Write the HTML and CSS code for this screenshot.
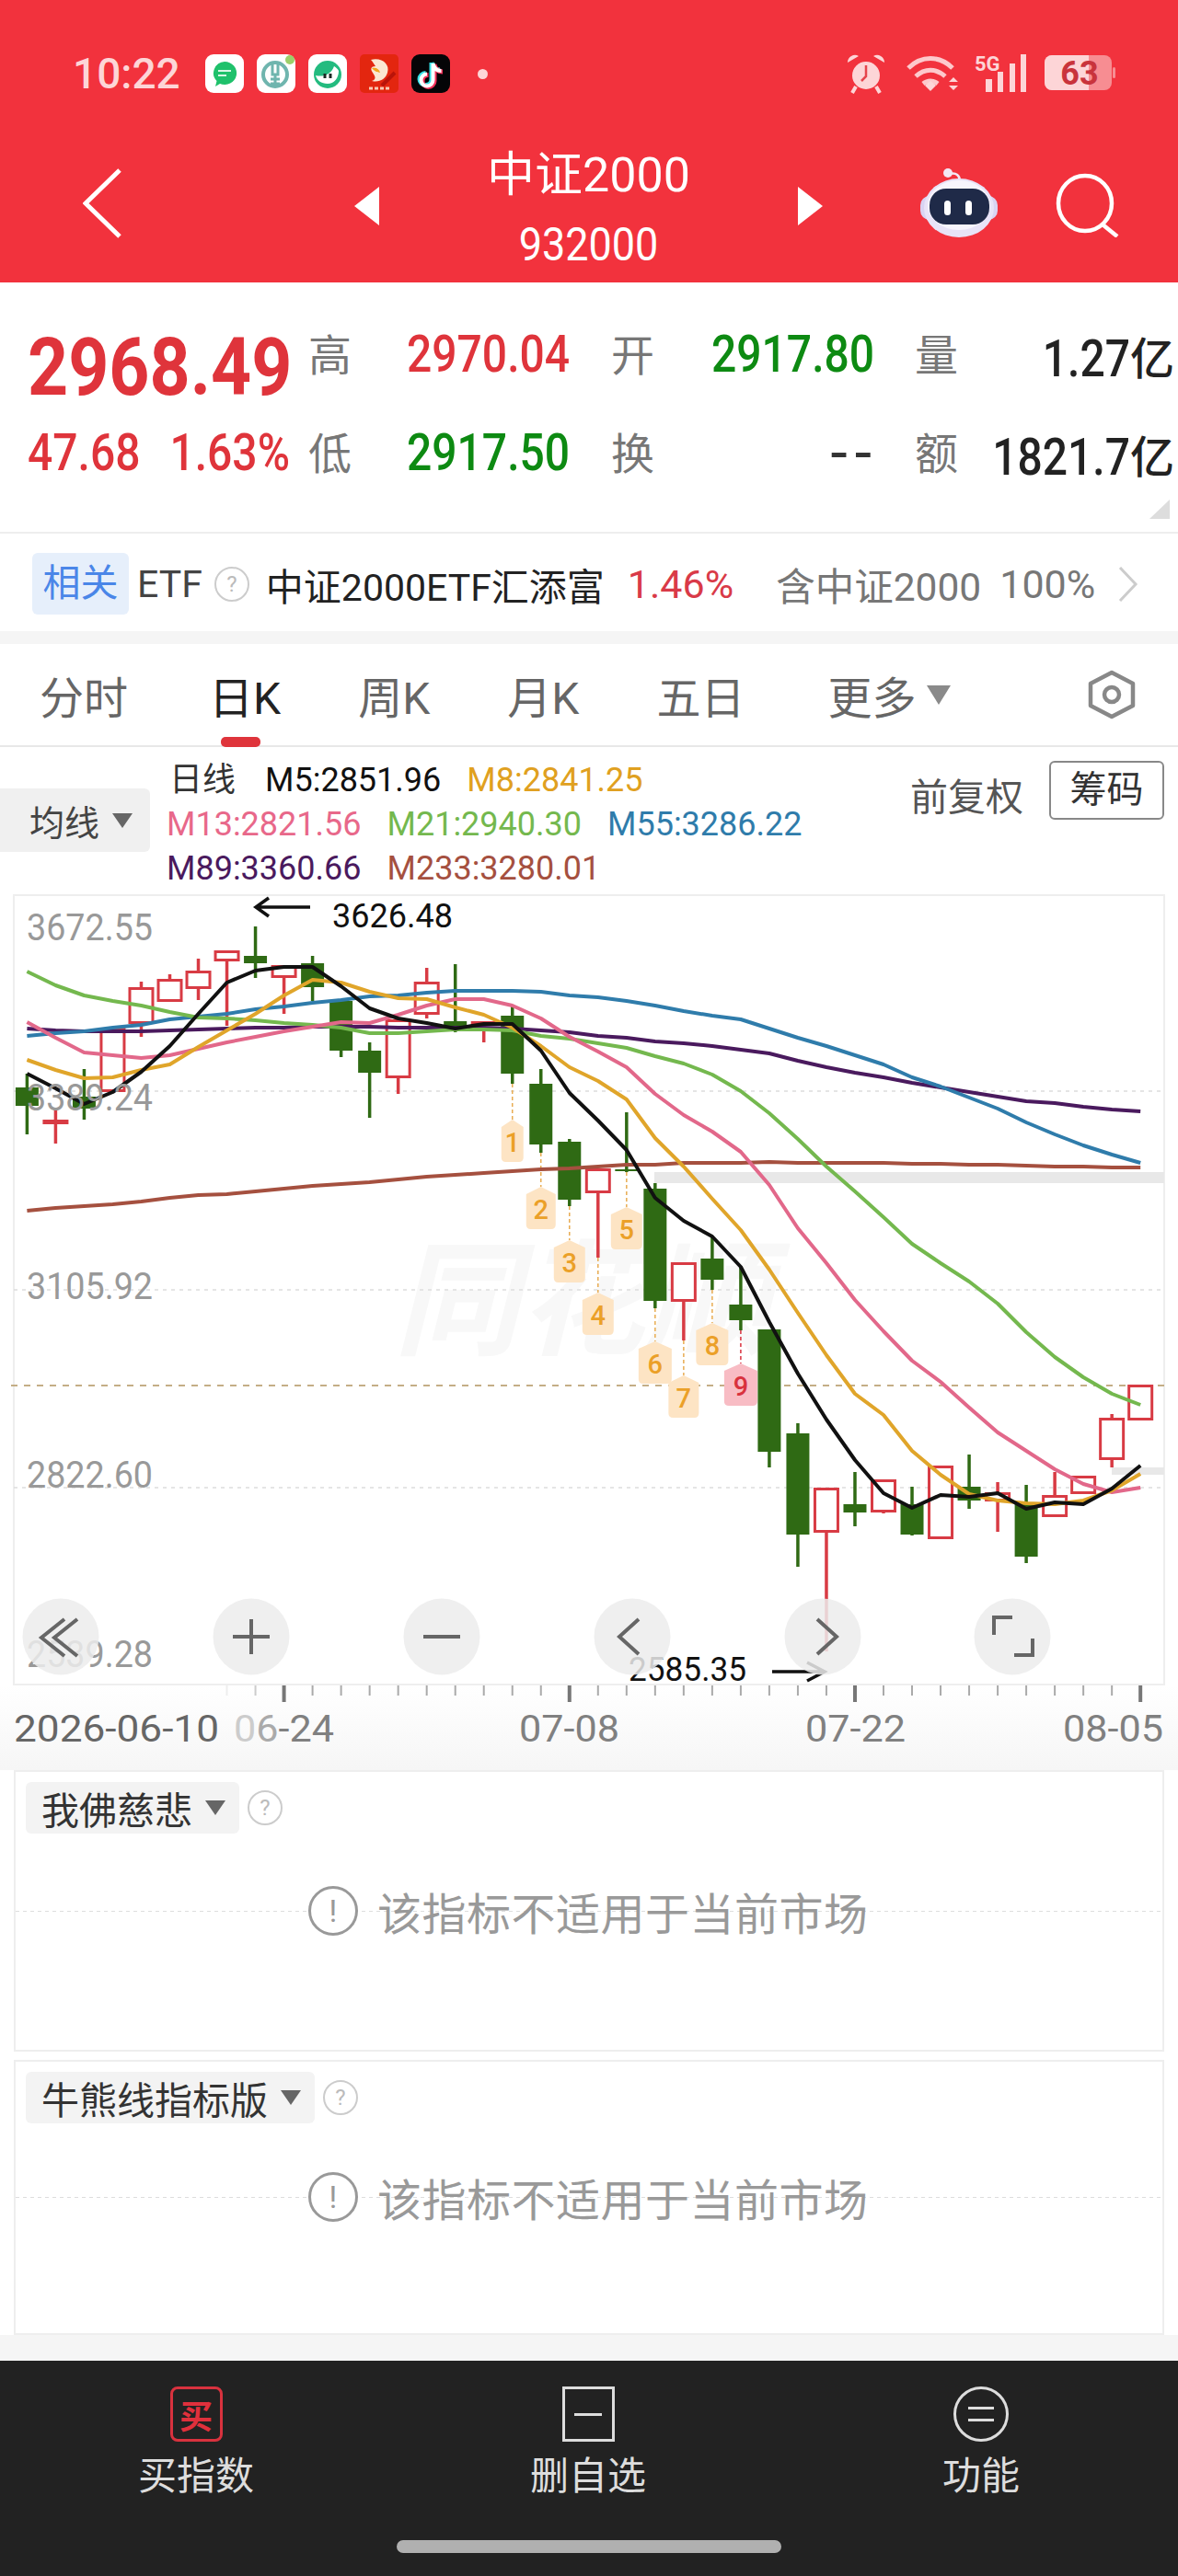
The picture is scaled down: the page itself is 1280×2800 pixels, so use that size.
FILE: index.html
```html
<!DOCTYPE html>
<html>
  <head>
    <meta charset="UTF-8">
    <title>中证2000</title>
    <link rel="stylesheet" href="styles.css">
  </head>
  <body>
    <header class="top">
      <div class="status">
        <span class="clock">10:22</span>
        <div class="apps">
          <svg class="app" viewBox="0 0 42 42"><rect width="42" height="42" rx="9" fill="#fff"/><path d="M21 8a13 12.5 0 1 1-5 24l-5 3 1.500-6A13 12.500 0 0 1 21 8z" fill="#1fc16b"/><path d="M14 18h14M14 23h9" stroke="#d8f7e5" stroke-width="2"/></svg>
          <svg class="app" viewBox="0 0 42 42"><rect width="42" height="42" rx="9" fill="#fff"/><circle cx="20" cy="22" r="13" fill="none" stroke="#6fb5ae" stroke-width="4"/><path d="M17 8v14h6V8M15 27h10M15 32h10M20 22v13" fill="none" stroke="#6fb5ae" stroke-width="3"/><circle cx="36" cy="6" r="5" fill="#9ccf6a"/></svg>
          <svg class="app" viewBox="0 0 42 42"><rect width="42" height="42" rx="9" fill="#fff"/><circle cx="21" cy="22" r="15" fill="#23bb7f"/><path d="M8 23c8 2 17-1 20-10 2 1 4 3 5 5 0 8-5 14-12 14-7 0-12-4-13-9z" fill="#fff"/><path d="M18 21v5M24 21v5" stroke="#1b2a25" stroke-width="3"/></svg>
          <svg class="app" viewBox="0 0 42 42"><rect width="42" height="42" rx="5" fill="#e3260f"/><path d="M12 6c12-3 21 5 18 14-2 7-9 11-17 9 6-2 3-6 1-9-3-4-2-7 3-7-2-3-3-5-5-7z" fill="#fbe7d2"/><path d="M13 15c5-1 8 1 9 5-3-1-6-1-9-5z" fill="#f2a51e"/><path d="M24 34l14-14" stroke="#b9140a" stroke-width="4"/><path d="M10 37h22" stroke="#f9c9b4" stroke-width="3" stroke-dasharray="4 2"/></svg>
          <svg class="app" viewBox="0 0 42 42"><rect width="42" height="42" rx="9" fill="#050507"/><path d="M22 9v18a6.500 6.500 0 1 1-6.500-6.500M22 9c1 5 4 8 9 8" fill="none" stroke="#36e0e6" stroke-width="5"/><path d="M25 11v18a6.500 6.500 0 1 1-6.500-6.500M25 11c1 5 4 8 9 8" fill="none" stroke="#f4315a" stroke-width="5"/><path d="M23.500 10v18a6.500 6.500 0 1 1-6.500-6.500M23.500 10c1 5 4 8 9 8" fill="none" stroke="#fff" stroke-width="4"/></svg>
          <i class="dot"></i>
        </div>
        <div class="sys">
          <svg class="sys-alarm" viewBox="0 0 44 44"><circle cx="22" cy="24" r="15" fill="#fdd5d7"/><path d="M2 10a8 8 0 0 1 12-7zM42 10a8 8 0 0 0-12-7z" fill="#fdd5d7"/><path d="M11 36l-4 7M33 36l4 7" stroke="#fdd5d7" stroke-width="4"/><path d="M22 13v12l-5 5" fill="none" stroke="#e6444c" stroke-width="2.500"/></svg>
          <svg class="sys-wifi" viewBox="0 0 60 40"><path d="M3 14c14-14 34-14 48 0M11 23c10-9 22-9 32 0M19 31c5-4 11-4 16 0" fill="none" stroke="#fdc9cc" stroke-width="5"/><path d="M21 33l6-5 6 5-6 6z" fill="#fdd5d7"/><path d="M47 29l5-5 5 5zM47 33h10l-5 5z" fill="#fdd5d7"/></svg>
          <svg class="sys-signal" viewBox="0 0 56 42"><text x="0" y="18" class="sys-5g">5G</text><path d="M12 27h7v14h-7zM25 19h6v22h-6zM38 10h6v31h-6zM50 0h6v41h-6z" fill="#fdd5d7"/></svg>
          <svg class="sys-batt" viewBox="0 0 78 40"><rect width="73" height="38" rx="8" fill="#f78d92"/><path d="M8 0h40v38H8a8 8 0 0 1-8-8V8a8 8 0 0 1 8-8z" fill="#fdd5d7"/><rect x="74" y="13" width="3" height="12" rx="1.500" fill="#f78d92"/><text x="38" y="32" text-anchor="middle" class="sys-level">63</text></svg>
        </div>
      </div>
      <nav class="nav">
        <svg class="nav-back" viewBox="0 0 42 76"><path d="M40 2L3 38l37 36" fill="none" stroke="#fff" stroke-width="5"/></svg>
        <i class="nav-prev"></i>
        <div class="nav-title">
          <div class="nav-name">中证2000</div>
          <div class="nav-code">932000</div>
        </div>
        <i class="nav-next"></i>
        <svg class="nav-robot" viewBox="0 0 84 76"><circle cx="30" cy="5" r="5" fill="#f3e7f4"/><path d="M32 6c7-2 11 2 11 8" fill="none" stroke="#f3e7f4" stroke-width="2.500"/><rect x="0" y="30" width="84" height="26" rx="10" fill="#d9d3f2"/><ellipse cx="42" cy="43" rx="38" ry="32" fill="#e8e3f7"/><ellipse cx="42" cy="40" rx="34" ry="27" fill="#f7f5fd"/><rect x="10" y="22" width="65" height="39" rx="18" fill="#1f2a48"/><rect x="26" y="35" width="7" height="16" rx="3.500" fill="#fff"/><rect x="49" y="35" width="7" height="16" rx="3.500" fill="#fff"/></svg>
        <svg class="nav-search" viewBox="0 0 70 70"><ellipse cx="32" cy="33" rx="29" ry="30" fill="none" stroke="#fff" stroke-width="4.500"/><path d="M51 56l16 13" stroke="#fff" stroke-width="4.500"/></svg>
      </nav>
    </header>

    <section class="quote">
      <div class="q-last up"><span class="num">2968.49</span></div>
      <div class="q-label">高</div><div class="q-val up"><span class="num">2970.04</span></div>
      <div class="q-label">开</div><div class="q-val down"><span class="num">2917.80</span></div>
      <div class="q-label">量</div><div class="q-val q-right"><span class="num">1.27</span>亿</div>
      <div class="q-chg up"><span class="num">47.68</span><span class="num">1.63%</span></div>
      <div class="q-label">低</div><div class="q-val down"><span class="num">2917.50</span></div>
      <div class="q-label">换</div><div class="q-val q-dash">--</div>
      <div class="q-label">额</div><div class="q-val q-right"><span class="num">1821.7</span>亿</div>
      <i class="q-corner"></i>
    </section>

    <section class="etf">
      <span class="etf-tag">相关</span>
      <span class="etf-word">ETF</span>
      <span class="etf-help">?</span>
      <span class="etf-name">中证2000ETF汇添富</span>
      <span class="etf-pct">1.46%</span>
      <span class="etf-hold">含中证2000</span>
      <span class="etf-share">100%</span>
      <svg class="etf-more" viewBox="0 0 22 38"><path d="M2 1l17 18L2 37" fill="none" stroke="#ccc" stroke-width="3"/></svg>
    </section>

    <div class="sep"></div>

    <div class="tabs">
      <span class="tab">分时</span>
      <span class="tab on">日K</span>
      <span class="tab">周K</span>
      <span class="tab">月K</span>
      <span class="tab">五日</span>
      <span class="tab tab-more">更多<i class="caret"></i></span>
      <svg class="tab-gear" viewBox="0 0 56 54"><path d="M28 3l23 12v24L28 51 5 39V15z" fill="none" stroke="#888" stroke-width="4.500" stroke-linejoin="round"/><ellipse cx="28" cy="27" rx="8" ry="8" fill="none" stroke="#888" stroke-width="4.500"/></svg>
    </div>

    <div class="legend">
      <div class="ma-pick">均线<i class="caret small"></i></div>
      <div class="ma-rows">
        <div class="ma-row first"><span class="ma-day">日线</span><span class="c5">M5:2851.96</span><span class="c8">M8:2841.25</span></div>
        <div class="ma-row"><span class="c13">M13:2821.56</span><span class="c21">M21:2940.30</span><span class="c55">M55:3286.22</span></div>
        <div class="ma-row"><span class="c89">M89:3360.66</span><span class="c233">M233:3280.01</span></div>
      </div>
      <div class="adjust">前复权</div>
      <div class="chips">筹码</div>
    </div>

    <svg id="chart" class="chart" viewBox="0 972 1280 952"></svg>

    <section class="panel">
      <div class="panel-head"><span class="pick">我佛慈悲<i class="caret small"></i></span><span class="help">?</span></div>
      <div class="panel-msg"><span class="warn">!</span><span class="msg-text">该指标不适用于当前市场</span></div>
    </section>
    <section class="panel second">
      <div class="panel-head"><span class="pick">牛熊线指标版<i class="caret small"></i></span><span class="help">?</span></div>
      <div class="panel-msg"><span class="warn">!</span><span class="msg-text">该指标不适用于当前市场</span></div>
    </section>

    <footer class="bottom">
      <div class="actions">
        <div class="action"><span class="act-buy">买</span><span class="act-label">买指数</span></div>
        <div class="action"><span class="act-box"><i></i></span><span class="act-label">删自选</span></div>
        <div class="action"><span class="act-menu"><i></i><i></i></span><span class="act-label">功能</span></div>
      </div>
      <div class="home"></div>
    </footer>

    <script>
      // every y below is a page pixel, the svg viewBox starts at 972
      const svg = document.getElementById('chart');
      const NS = 'http://www.w3.org/2000/svg';
      const cx = i => 29.4 + 31.02 * i;

      function add(tag, attrs, text) {
        const el = document.createElementNS(NS, tag);
        for (const k in attrs) el.setAttribute(k, attrs[k]);
        if (text !== undefined) el.textContent = text;
        svg.appendChild(el);
        return el;
      }

      // text squeezed to the narrow digits of the app
      function label(x, y, cls, text, width) {
        return add('text', { x: x, y: y, class: cls, textLength: width, lengthAdjust: 'spacingAndGlyphs' }, text);
      }

      // [high, top, bottom, low, up?]
      const candles = [
        [1167, 1182, 1202, 1233, 0], [1205, 1217, 1222, 1243, 1], [1162, 1192, 1205, 1217, 0],
        [1117, 1117, 1187, 1187, 1], [1067, 1073, 1113, 1127, 1], [1059, 1064, 1089, 1089, 1],
        [1042, 1055, 1075, 1087, 1], [1033, 1033, 1045, 1115, 1], [1007, 1039, 1047, 1063, 0],
        [1049, 1049, 1063, 1102, 1], [1039, 1047, 1073, 1088, 0], [1088, 1088, 1142, 1149, 0],
        [1133, 1142, 1166, 1215, 0], [1108, 1108, 1172, 1189, 1], [1052, 1067, 1103, 1107, 1],
        [1048, 1110, 1119, 1122, 0], [1110, 1110, 1115, 1133, 1], [1094, 1104, 1167, 1178, 0],
        [1162, 1178, 1244, 1253, 0], [1238, 1241, 1304, 1311, 0], [1270, 1270, 1297, 1367, 1],
        [1209, 1271, 1273, 1274, 0], [1286, 1292, 1414, 1422, 0], [1372, 1372, 1415, 1457, 1],
        [1345, 1368, 1391, 1402, 0], [1377, 1418, 1435, 1446, 0], [1445, 1445, 1578, 1595, 0],
        [1547, 1558, 1668, 1703, 0], [1617, 1617, 1666, 1795, 1], [1600, 1635, 1644, 1659, 0],
        [1608, 1608, 1644, 1645, 1], [1616, 1635, 1668, 1669, 0], [1593, 1593, 1673, 1673, 1],
        [1581, 1616, 1631, 1640, 0], [1611, 1622, 1632, 1665, 1], [1614, 1635, 1692, 1699, 0],
        [1600, 1625, 1649, 1649, 1], [1604, 1604, 1624, 1624, 1], [1537, 1541, 1587, 1595, 1],
        [1505, 1505, 1544, 1544, 1]
      ];

      const lines = {
        '#a5503f': [1316, 1313, 1311, 1309, 1306, 1302, 1299, 1298, 1295, 1292, 1289, 1287, 1285, 1282, 1279, 1277, 1275, 1273, 1271, 1270, 1268, 1266, 1266, 1264, 1264, 1264, 1263, 1264, 1264, 1264, 1264, 1265, 1265, 1266, 1266, 1267, 1268, 1268, 1269, 1269],
        '#4a1a5e': [1118, 1120, 1121, 1121, 1121, 1120, 1119, 1118, 1117, 1117, 1116, 1116, 1116, 1117, 1117, 1117, 1117, 1118, 1120, 1122, 1126, 1128, 1132, 1134, 1137, 1141, 1145, 1153, 1160, 1166, 1171, 1177, 1182, 1187, 1192, 1197, 1199, 1203, 1206, 1208],
        '#2f7cab': [1126, 1123, 1121, 1117, 1114, 1108, 1105, 1102, 1097, 1094, 1090, 1087, 1083, 1082, 1079, 1077, 1077, 1077, 1078, 1082, 1084, 1088, 1093, 1099, 1104, 1108, 1118, 1128, 1137, 1147, 1157, 1171, 1181, 1193, 1205, 1220, 1233, 1245, 1255, 1264],
        '#74b84e': [1056, 1071, 1082, 1088, 1093, 1100, 1106, 1107, 1109, 1112, 1114, 1117, 1123, 1123, 1121, 1119, 1119, 1120, 1126, 1129, 1134, 1139, 1148, 1156, 1168, 1186, 1210, 1238, 1268, 1295, 1323, 1352, 1373, 1393, 1417, 1448, 1475, 1497, 1515, 1527],
        '#e2688a': [1111, 1128, 1144, 1147, 1150, 1147, 1140, 1133, 1127, 1121, 1116, 1111, 1112, 1103, 1093, 1086, 1086, 1093, 1107, 1127, 1143, 1160, 1189, 1212, 1230, 1252, 1288, 1335, 1373, 1413, 1447, 1479, 1502, 1530, 1557, 1577, 1597, 1613, 1622, 1617],
        '#e0a52a': [1152, 1163, 1172, 1171, 1163, 1157, 1138, 1120, 1102, 1082, 1065, 1068, 1078, 1085, 1086, 1095, 1103, 1117, 1137, 1160, 1175, 1195, 1237, 1268, 1303, 1337, 1380, 1427, 1473, 1515, 1538, 1577, 1603, 1624, 1631, 1634, 1635, 1631, 1620, 1602],
        '#111': [1167, 1183, 1200, 1187, 1165, 1137, 1102, 1068, 1055, 1051, 1051, 1072, 1096, 1107, 1112, 1118, 1113, 1113, 1142, 1188, 1218, 1250, 1302, 1327, 1344, 1377, 1437, 1493, 1543, 1587, 1623, 1639, 1625, 1627, 1623, 1640, 1633, 1635, 1618, 1593]
      };

      // [candle, label top, width, digit]
      const marks = [
        [17, 1217, 24, '1'], [18, 1290, 32, '2'], [19, 1348, 34, '3'], [20, 1405, 34, '4'], [21, 1312, 34, '5'],
        [22, 1458, 36, '6'], [23, 1495, 33, '7'], [24, 1438, 35, '8'], [25, 1482, 36, '9']
      ];

      const defs = add('defs', {});
      defs.innerHTML = '<linearGradient id="fade" x1="0" y1="0" x2="0" y2="1"><stop offset="0" stop-color="#fff"/><stop offset="1" stop-color="#f6f6f6"/></linearGradient>';
      add('rect', { x: 0, y: 1832, width: 1280, height: 92, fill: 'url(#fade)' });
      add('rect', { x: 15, y: 973, width: 1250, height: 858, class: 'frame' });
      add('text', { x: 428, y: 1462, class: 'brand' }, '同花顺');

      [1186, 1402, 1617].forEach(y => add('line', { x1: 15, x2: 1265, y1: y, y2: y, class: 'grid' }));
      add('rect', { x: 711, y: 1274, width: 554, height: 12, class: 'stripe' });
      add('rect', { x: 1208, y: 1595, width: 57, height: 8, class: 'stripe' });
      add('line', { x1: 12, x2: 1265, y1: 1506, y2: 1506, class: 'now' });

      candles.forEach((c, i) => {
        const [high, top, bottom, low, up] = c;
        const x = cx(i);
        const cls = up ? 'up-c' : 'dn-c';
        if (top > high) add('line', { x1: x, x2: x, y1: high, y2: top, class: cls });
        if (low > bottom) add('line', { x1: x, x2: x, y1: bottom, y2: low, class: cls });
        if (up) add('rect', { x: x - 12.5, y: top + 1.5, width: 25, height: bottom - top - 3, class: 'up-b' });
        else add('rect', { x: x - 12.5, y: top, width: 25, height: bottom - top, class: 'dn-b' });
      });

      marks.forEach(m => {
        const [i, y, w, digit] = m;
        const x = cx(i);
        const r = w / 2;
        const red = digit === '9';
        add('line', { x1: x, x2: x, y1: candles[i][3], y2: y, class: red ? 'td-link red' : 'td-link' });
        add('path', {
          d: `M${x} ${y}L${x + r} ${y + 8}V${y + 41}Q${x + r} ${y + 46} ${x + r - 5} ${y + 46}H${x - r + 5}Q${x - r} ${y + 46} ${x - r} ${y + 41}V${y + 8}Z`,
          class: red ? 'td-bg red' : 'td-bg'
        });
        add('text', { x: x, y: y + 35, class: red ? 'td-num red' : 'td-num' }, digit);
      });

      for (const color in lines) {
        const pts = lines[color].map((y, i) => `${cx(i).toFixed(1)},${y}`).join(' ');
        add('polyline', { points: pts, stroke: color, class: 'ma' });
      }

      [['3672.55', 1022], ['3389.24', 1207], ['3105.92', 1412], ['2822.60', 1617], ['2539.28', 1812]].forEach(p => {
        label(29, p[1], 'price', p[0], 137);
      });

      label(361, 1008, 'peak', '3626.48', 131);
      add('path', { d: 'M337 986H279M292 976l-14 10 14 10', class: 'arrow' });
      label(683, 1827, 'peak', '2585.35', 128);
      add('path', { d: 'M839 1817H896M877 1807l19 10-19 10', class: 'arrow' });

      [66, 273, 480, 687, 894, 1100].forEach(x => add('circle', { cx: x, cy: 1779, r: 41.5, class: 'ctl' }));
      [
        'M70 1760L45 1780l25 20M84 1760L59 1780l25 20',
        'M253 1779h40M273 1760v38',
        'M460 1779h40',
        'M694 1760l-21 19 21 19',
        'M888 1760l21 19-21 19',
        'M1100 1758h-20v19M1122 1781v18h-20'
      ].forEach(d => add('path', { d: d, class: 'ctl-icon' }));

      for (let i = 7; i < 40; i++) {
        const major = (i - 9) % 10 === 0;
        const cls = i === 7 ? 'tick t7' : i === 8 ? 'tick t8' : major ? 'tick big' : 'tick';
        add('line', { x1: cx(i), x2: cx(i), y1: 1832, y2: major ? 1850 : 1843, class: cls });
      }

      label(15, 1893, 'date first', '2026-06-10', 223);
      const d2 = label(254, 1893, 'date', '', 109);
      d2.innerHTML = '<tspan class="d-a">0</tspan><tspan class="d-b">6</tspan>-24';
      label(564, 1893, 'date', '07-08', 109);
      label(875, 1893, 'date', '07-22', 109);
      label(1155, 1893, 'date', '08-05', 109);
    </script>
  </body>
</html>
```

FILE: styles.css
```css
* {
  box-sizing: border-box;
}

body {
  margin: 0;
  width: 1280px;
  height: 2800px;
  overflow: hidden;
  background: #fff;
  font-family: Roboto, "Noto Sans CJK SC", sans-serif;
  color: #222;
}

i {
  display: block;
}

/* header */
.top {
  height: 307px;
  background: #f2323d;
  color: #fff;
}

.status {
  display: flex;
  align-items: center;
  height: 101px;
  padding: 59px 0 0 79px;
}

.clock {
  width: 144px;
  font-size: 46px;
  font-weight: 500;
  color: #fdd5d7;
}

.apps {
  display: flex;
  align-items: center;
  gap: 14px;
}

.app {
  width: 42px;
  height: 42px;
}

.dot {
  width: 11px;
  height: 11px;
  margin-left: 16px;
  border-radius: 50%;
  background: #fdd5d7;
}

.sys {
  display: flex;
  align-items: center;
  margin-left: 389px;
}

.sys-alarm {
  width: 44px;
  height: 44px;
}

.sys-wifi {
  width: 60px;
  height: 40px;
  margin-left: 21px;
}

.sys-signal {
  width: 56px;
  height: 42px;
  margin-left: 15px;
  overflow: visible;
}

.sys-batt {
  width: 78px;
  height: 40px;
  margin-left: 20px;
}

.sys-5g {
  font-size: 22px;
  font-weight: 700;
  fill: #fdd5d7;
}

.sys-level {
  font-size: 36px;
  font-weight: 700;
  fill: #c9343c;
}

.nav {
  display: flex;
  align-items: center;
  padding: 60px 0 0 90px;
}

.nav-back {
  width: 42px;
  height: 76px;
  margin: 0 253px 12px 0;
}

.nav-prev,
.nav-next {
  width: 0;
  height: 0;
  margin-bottom: 6px;
  border-top: 21px solid transparent;
  border-bottom: 21px solid transparent;
}

.nav-prev {
  border-right: 27px solid #fff;
}

.nav-next {
  border-left: 27px solid #fff;
}

.nav-title {
  width: 455px;
  text-align: center;
}

.nav-name {
  font-size: 52px;
  line-height: 60px;
}

.nav-code {
  font-size: 45px;
  line-height: 52px;
  margin-top: 20px;
  transform: scaleY(1.1);
}

.nav-robot {
  width: 84px;
  height: 76px;
  margin: 0 0 13px 106px;
}

.nav-search {
  width: 70px;
  height: 70px;
  margin: 0 0 8px 63px;
}

/* quote */
.quote {
  position: relative;
  display: grid;
  grid-template-columns: 305px 107px 222px 109px 221px 48px 234px;
  grid-auto-rows: 107px;
  align-items: center;
  height: 273px;
  padding: 25px 0 0 30px;
  border-bottom: 2px solid #eee;
}

.up {
  color: #df343b;
}

.down {
  color: #0d8a12;
}

.num {
  display: inline-block;
  transform: scaleY(1.15);
}

.q-last {
  font-size: 77px;
  font-weight: 700;
  line-height: 1;
  margin-top: 30px;
}

.q-last .num {
  transform: scaleY(1.12);
}

.q-label {
  margin-top: -6px;
  font-size: 47px;
  color: #777;
}

.q-val {
  font-size: 48px;
  font-weight: 500;
  white-space: nowrap;
}

.q-right {
  text-align: right;
  color: #222;
}

.q-dash {
  width: 182px;
  font-size: 66px;
  font-weight: 400;
  line-height: 1;
  letter-spacing: 8px;
  text-align: right;
  color: #333;
}

.q-chg {
  display: flex;
  gap: 32px;
  font-size: 48px;
  font-weight: 500;
}

.q-corner {
  position: absolute;
  right: 9px;
  bottom: 14px;
  width: 0;
  height: 0;
  border-left: 22px solid transparent;
  border-bottom: 21px solid #ddd;
}

/* etf row */
.etf {
  display: flex;
  align-items: center;
  height: 106px;
  padding: 3px 0 0 35px;
  font-size: 41px;
  white-space: nowrap;
}

.etf-tag {
  width: 105px;
  height: 67px;
  line-height: 67px;
  text-align: center;
  border-radius: 6px;
  background: #e6effb;
  color: #4a86e8;
}

.etf-word {
  margin-left: 9px;
  color: #444;
}

.etf-help,
.help {
  display: block;
  width: 38px;
  height: 38px;
  line-height: 34px;
  text-align: center;
  border: 2px solid #ccc;
  border-radius: 50%;
  font-size: 24px;
  color: #bbb;
}

.etf-help {
  margin-left: 13px;
}

.etf-name {
  margin-left: 18px;
  color: #222;
}

.etf-pct {
  margin-left: 25px;
  font-size: 43px;
  color: #d93a48;
}

.etf-hold {
  margin-left: 46px;
  font-size: 42.5px;
  color: #777;
}

.etf-share {
  margin-left: 20px;
  font-size: 43px;
  color: #777;
}

.etf-more {
  width: 22px;
  height: 38px;
  margin-left: 25px;
}

.sep {
  height: 14px;
  background: #f5f5f5;
}

/* tabs */
.tabs {
  display: flex;
  align-items: center;
  gap: 84px;
  height: 112px;
  padding-left: 43px;
  border-bottom: 2px solid #e8e8e8;
  font-size: 48px;
  color: #666;
}

.tab {
  position: relative;
  white-space: nowrap;
}

.tab:first-child {
  margin-right: 4px;
}

.tab.on {
  color: #222;
}

.tab.on::after {
  content: "";
  position: absolute;
  left: 13px;
  bottom: -22px;
  width: 43px;
  height: 11px;
  border-radius: 5px;
  background: #df343b;
}

.tab-more {
  display: flex;
  align-items: center;
  margin-left: 6px;
}

.caret {
  width: 0;
  height: 0;
  margin-left: 12px;
  border-left: 13px solid transparent;
  border-right: 13px solid transparent;
  border-top: 21px solid #8a8a8a;
}

.caret.small {
  margin-left: 14px;
  border-left-width: 11px;
  border-right-width: 11px;
  border-top: 16px solid #666;
}

.tab-gear {
  width: 56px;
  height: 54px;
  margin-left: 63px;
}

/* ma legend */
.legend {
  display: flex;
  align-items: flex-start;
  height: 160px;
  font-size: 36px;
}

.ma-pick {
  display: flex;
  align-items: center;
  width: 163px;
  height: 69px;
  margin-top: 45px;
  padding-left: 32px;
  border-radius: 0 6px 6px 0;
  background: #f0f0f0;
  font-size: 38px;
  color: #444;
}

.ma-rows {
  width: 799px;
  padding: 12px 0 0 18px;
}

.ma-row {
  display: flex;
  gap: 28px;
  height: 48px;
  line-height: 48px;
  white-space: nowrap;
}

.ma-day {
  margin: 0 4px 0 3px;
  color: #333;
}

.c5 { color: #111; }
.c8 { color: #e0a020; }
.c13 { color: #e8688a; }
.c21 { color: #74b84e; }
.c55 { color: #2f7cab; }
.c89 { color: #4a1a5e; }
.c233 { color: #a5503f; }

.adjust {
  width: 151px;
  margin: 30px 0 0 27px;
  font-size: 41px;
  line-height: 50px;
  white-space: nowrap;
  color: #555;
}

.chips {
  width: 125px;
  height: 64px;
  margin-top: 15px;
  border: 2px solid #888;
  border-radius: 6px;
  font-size: 40px;
  line-height: 60px;
  text-align: center;
  color: #333;
}

/* chart */
.chart {
  display: block;
  width: 1280px;
  height: 952px;
}

.frame {
  fill: #fff;
  stroke: #eee;
  stroke-width: 2;
}

.brand {
  font-size: 136px;
  font-weight: 700;
  font-style: italic;
  fill: #f8f8f8;
}

.grid {
  stroke: #ddd;
  stroke-width: 1.5;
  stroke-dasharray: 4 5;
}

.stripe {
  fill: #e8e8e8;
}

.now {
  stroke: #c4ae86;
  stroke-width: 2;
  stroke-dasharray: 7 7;
}

.up-c {
  stroke: #d83b44;
  stroke-width: 3.5;
}

.dn-c {
  stroke: #2f6a14;
  stroke-width: 3.5;
}

.up-b {
  fill: #fff;
  stroke: #d83b44;
  stroke-width: 3;
}

.dn-b {
  fill: #2f6a14;
}

.td-link {
  stroke: #e8ac52;
  stroke-width: 1.5;
  stroke-dasharray: 4 3;
}

.td-link.red {
  stroke: #d9323e;
}

.td-bg {
  fill: #fde4c4;
}

.td-bg.red {
  fill: #f8bcc4;
}

.td-num {
  font-size: 29px;
  font-weight: 500;
  text-anchor: middle;
  fill: #eba028;
}

.td-num.red {
  fill: #d9323e;
}

.ma {
  fill: none;
  stroke-width: 4;
  stroke-linejoin: round;
}

.price {
  font-size: 41px;
  fill: #999;
}

.peak {
  font-size: 37px;
  fill: #111;
}

.arrow {
  fill: none;
  stroke: #111;
  stroke-width: 3.5;
}

.ctl {
  fill: #ececec;
  fill-opacity: 0.85;
}

.ctl-icon {
  fill: none;
  stroke: #666;
  stroke-width: 4;
}

.tick {
  stroke: #aaa;
  stroke-width: 2;
}

.tick.big {
  stroke: #777;
  stroke-width: 4;
}

.tick.t7 {
  stroke: #eee;
}

.tick.t8 {
  stroke: #ccc;
}

.date {
  font-size: 40px;
  fill: #808080;
}

.date.first {
  fill: #666;
}

.d-a {
  fill: #ccc;
}

.d-b {
  fill: #aaa;
}

/* indicator panels */
.panel {
  width: 1250px;
  height: 306px;
  margin-left: 15px;
  padding: 11px 11px;
  border: 2px solid #eee;
}

.panel.second {
  height: 299px;
  margin-top: 9px;
}

.panel-head {
  display: flex;
  align-items: center;
  gap: 9px;
}

.pick {
  display: flex;
  align-items: center;
  height: 56px;
  padding: 0 15px 0 17px;
  border-radius: 6px;
  background: #f3f3f3;
  font-size: 41px;
  color: #333;
}

.panel-msg {
  display: flex;
  align-items: center;
  gap: 21px;
  height: 54px;
  margin: 57px -11px 0;
  padding-left: 318px;
  background: repeating-linear-gradient(90deg, #ddd 0 4px, transparent 4px 8px) center / 100% 1px no-repeat;
}

.second .panel-msg {
  margin-top: 53px;
}

.warn {
  width: 54px;
  height: 54px;
  line-height: 48px;
  text-align: center;
  border: 3px solid #999;
  border-radius: 50%;
  background: #fff;
  font-size: 34px;
  color: #999;
}

.msg-text {
  font-size: 48px;
  letter-spacing: 0.5px;
  color: #999;
}

/* bottom bar */
.bottom {
  height: 234px;
  margin-top: 28px;
  background: #222;
  box-shadow: 0 -28px 0 #f5f5f5;
}

.actions {
  display: grid;
  grid-template-columns: 426px 426px 428px;
  height: 195px;
  padding-top: 28px;
}

.action {
  display: flex;
  flex-direction: column;
  align-items: center;
}

.act-buy,
.act-box,
.act-menu {
  display: flex;
  align-items: center;
  justify-content: center;
  width: 57px;
  height: 60px;
}

.act-buy {
  border: 3px solid #d9323e;
  border-radius: 8px;
  font-size: 36px;
  font-weight: 700;
  color: #e0303c;
}

.act-box {
  border: 3px solid #ddd;
}

.act-box i {
  width: 30px;
  height: 3px;
  background: #ddd;
}

.act-menu {
  flex-direction: column;
  gap: 10px;
  width: 60px;
  border: 3px solid #ddd;
  border-radius: 50%;
}

.act-menu i {
  width: 28px;
  height: 3px;
  background: #ddd;
}

.act-label {
  margin-top: 16px;
  font-size: 42px;
  line-height: 44px;
  color: #ddd;
}

.home {
  width: 418px;
  height: 14px;
  margin-left: 431px;
  border-radius: 7px;
  background: #b0b0b0;
}
```
